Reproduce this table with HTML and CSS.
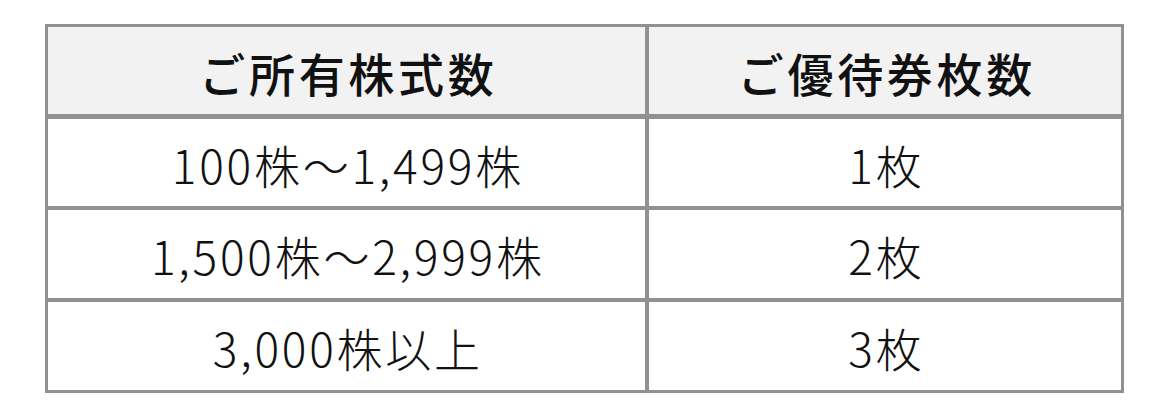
FILE: index.html
```html
<!DOCTYPE html>
<html lang="ja">
<head>
<meta charset="utf-8">
<title>株主優待</title>
<link rel="stylesheet" href="styles.css">
</head>
<body>
<div class="page">
  <div class="table">
    <div class="cell head">ご所有株式数</div>
    <div class="cell head">ご優待券枚数</div>
    <div class="cell">100株～1,499株</div>
    <div class="cell">1枚</div>
    <div class="cell">1,500株～2,999株</div>
    <div class="cell">2枚</div>
    <div class="cell">3,000株以上</div>
    <div class="cell">3枚</div>
  </div>
</div>
</body>
</html>
```
FILE: styles.css
```css
html, body {
  margin: 0;
  padding: 0;
  background: #ffffff;
}
.page {
  padding: 24px 0 0 45px;
}
.table {
  display: inline-grid;
  grid-template-columns: 597px 472px;
  grid-template-rows: 88px 87px 88px 88px;
  gap: 4px;
  padding: 3px;
  background: #919191;
}
.cell {
  background: #ffffff;
  display: flex;
  align-items: center;
  justify-content: center;
  font-family: "Noto Sans CJK JP", "Noto Sans", sans-serif;
  font-size: 46px;
  font-weight: 300;
  letter-spacing: 0.06em;
  color: #111111;
  padding-left: 0.06em;
  padding-top: 2px;
}
.head {
  background: #f2f2f2;
  font-weight: 500;
  letter-spacing: 0.08em;
  padding-left: 0.08em;
  margin-bottom: 1px;
}
```
